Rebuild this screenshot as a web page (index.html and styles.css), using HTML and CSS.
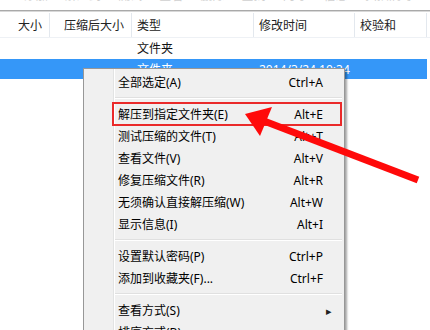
FILE: index.html
```html
<!DOCTYPE html>
<html lang="zh-CN">
<head>
    <meta charset="UTF-8">
    <title>解压菜单</title>
    <link rel="stylesheet" href="styles.css">
</head>
<body>
    <div class="toolbar">
        <span class="toolbar-text">添加 解压到 测试 查看 删除 查找 向导 信息 扫描病毒 注释</span>
    </div>
    <div class="file-list">
        <div class="list-head">
            <div class="cell right">大小</div>
            <div class="cell right">压缩后大小</div>
            <div class="cell">类型</div>
            <div class="cell">修改时间</div>
            <div class="cell">校验和</div>
            <div class="cell"></div>
        </div>
        <div class="list-row">
            <div class="cell"></div>
            <div class="cell"></div>
            <div class="cell">文件夹</div>
            <div class="cell"></div>
            <div class="cell"></div>
            <div class="cell"></div>
        </div>
        <div class="list-row selected">
            <div class="cell"></div>
            <div class="cell"></div>
            <div class="cell">文件夹</div>
            <div class="cell">2014/3/24 10:34</div>
            <div class="cell"></div>
            <div class="cell"></div>
        </div>
    </div>

    <div class="context-menu">
        <div class="menu-item"><span>全部选定(A)</span><span class="key">Ctrl+A</span></div>
        <div class="menu-sep"></div>
        <div class="menu-item marked"><span>解压到指定文件夹(E)</span><span class="key">Alt+E</span></div>
        <div class="menu-item"><span>测试压缩的文件(T)</span><span class="key">Alt+T</span></div>
        <div class="menu-item"><span>查看文件(V)</span><span class="key">Alt+V</span></div>
        <div class="menu-item"><span>修复压缩文件(R)</span><span class="key">Alt+R</span></div>
        <div class="menu-item"><span>无须确认直接解压缩(W)</span><span class="key">Alt+W</span></div>
        <div class="menu-item"><span>显示信息(I)</span><span class="key">Alt+I</span></div>
        <div class="menu-sep"></div>
        <div class="menu-item"><span>设置默认密码(P)</span><span class="key">Ctrl+P</span></div>
        <div class="menu-item"><span>添加到收藏夹(F)...</span><span class="key">Ctrl+F</span></div>
        <div class="menu-sep"></div>
        <div class="menu-item"><span>查看方式(S)</span><span class="sub">&#9656;</span></div>
        <div class="menu-item"><span>排序方式(B)</span><span class="sub">&#9656;</span></div>
    </div>

    <svg class="arrow" width="430" height="330" viewBox="0 0 430 330">
        <line x1="264" y1="121" x2="418" y2="180" stroke="#ff0a0a" stroke-width="7"/>
        <polygon points="245,114 272,107 260,136" fill="#ff0a0a"/>
    </svg>
</body>
</html>
```

FILE: styles.css
```css
body {
    margin: 0;
    background: #fff;
    font-family: "Noto Sans", "Noto Sans CJK SC", sans-serif;
    font-size: 12px;
    color: #111;
    width: 430px;
    height: 330px;
    overflow: hidden;
}
.toolbar {
    height: 10px;
    overflow: hidden;
    border-bottom: 1px solid #a9a9a9;
    box-shadow: 0 1px 0 #d8d8d8;
}
.toolbar-text {
    display: block;
    margin-top: -11px;
    padding-left: 24px;
    line-height: 14px;
    color: #d0d0d0;
    word-spacing: 14px;
    white-space: nowrap;
}
.file-list {
    margin-top: 2px;
}
.list-head,
.list-row {
    display: grid;
    grid-template-columns: 50px 82px 122px 101px 72px 1fr;
}
.list-head {
    height: 24px;
    line-height: 26px;
    color: #222;
    border-bottom: 1px solid #eef1f5;
}
.list-head .cell {
    border-right: 1px solid #e3e8ee;
}
.list-row {
    height: 20px;
    line-height: 21px;
}
.list-row:first-of-type {
    margin-top: 1px;
}
.list-row.selected {
    margin-top: 1px;
    background: #3597f8;
    color: #fff;
    margin-right: 3px;
}
.cell {
    padding: 0 6px 0 5px;
    white-space: nowrap;
    overflow: hidden;
}
.cell.right {
    text-align: right;
    padding-right: 7px;
}
.context-menu {
    position: absolute;
    left: 83px;
    top: 68px;
    width: 260px;
    height: 268px;
    padding-top: 2px;
    border: 1px solid #979797;
    background: linear-gradient(to right, #f0f0f0 29px, #e2e3e3 29px, #e2e3e3 30px, #fff 30px, #fff 31px, #f0f0f0 31px);
    box-shadow: 2px 2px 2px rgba(0, 0, 0, 0.35);
    color: #000;
}
.menu-item {
    display: flex;
    justify-content: space-between;
    align-items: center;
    height: 22px;
    margin: 0 3px 0 29px;
    padding: 0 18px 0 5px;
}
.menu-item .sub {
    font-size: 11px;
    margin-right: -9px;
    color: #222;
}
.menu-item.marked {
    outline: 2px solid #ea2a2a;
    outline-offset: -1px;
}
.menu-sep {
    height: 4px;
    margin: 0 2px 5px 31px;
    border-bottom: 1px solid #e0e0e0;
    box-shadow: 0 1px 0 #fff;
}
.arrow {
    position: absolute;
    left: 0;
    top: 0;
    pointer-events: none;
}
```
